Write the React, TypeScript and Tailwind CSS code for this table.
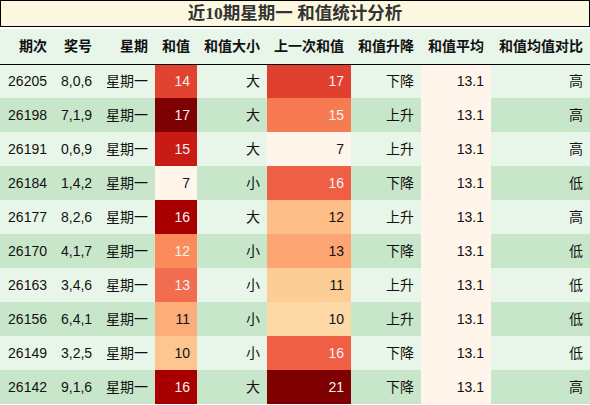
import React from "react";

interface Row {
  issue: string;
  nums: string;
  sum: number;
  sumCls: string;
  size: string;
  prev: number;
  prevCls: string;
  trend: string;
  cmp: string;
}

// heat colours, written out per value so tailwind picks them up
const sumColor: Record<number, string> = {
  7: "bg-[#fff5eb] text-[#111]",
  10: "bg-[#fdc590] text-[#111]",
  11: "bg-[#fdad78] text-[#111]",
  12: "bg-[#fc8b5b] text-[#f4f4f4]",
  13: "bg-[#f26c4f] text-[#f4f4f4]",
  14: "bg-[#e2432f] text-[#f4f4f4]",
  15: "bg-[#c81b16] text-[#f4f4f4]",
  16: "bg-[#a80000] text-[#f4f4f4]",
  17: "bg-[#7f0000] text-[#f4f4f4]",
};

const prevColor: Record<number, string> = {
  7: "bg-[#fff5eb] text-[#111]",
  10: "bg-[#fdd9a8] text-[#111]",
  11: "bg-[#fdcd96] text-[#111]",
  12: "bg-[#fdbe87] text-[#111]",
  13: "bg-[#fda673] text-[#111]",
  15: "bg-[#f67b53] text-[#f4f4f4]",
  16: "bg-[#ef5f45] text-[#f4f4f4]",
  17: "bg-[#e0402d] text-[#f4f4f4]",
  21: "bg-[#7f0000] text-[#f4f4f4]",
};

const raw: [string, string, number, string, number, string, string][] = [
  ["26205", "8,0,6", 14, "大", 17, "下降", "高"],
  ["26198", "7,1,9", 17, "大", 15, "上升", "高"],
  ["26191", "0,6,9", 15, "大", 7, "上升", "高"],
  ["26184", "1,4,2", 7, "小", 16, "下降", "低"],
  ["26177", "8,2,6", 16, "大", 12, "上升", "高"],
  ["26170", "4,1,7", 12, "小", 13, "下降", "低"],
  ["26163", "3,4,6", 13, "小", 11, "上升", "低"],
  ["26156", "6,4,1", 11, "小", 10, "上升", "低"],
  ["26149", "3,2,5", 10, "小", 16, "下降", "低"],
  ["26142", "9,1,6", 16, "大", 21, "下降", "高"],
];

const rows: Row[] = raw.map(([issue, nums, sum, size, prev, trend, cmp]) => ({
  issue,
  nums,
  sum,
  sumCls: sumColor[sum],
  size,
  prev,
  prevCls: prevColor[prev],
  trend,
  cmp,
}));

const headers = ["期次", "奖号", "星期", "和值", "和值大小", "上一次和值", "和值升降", "和值平均", "和值均值对比"];
const widths = [54, 45, 56, 42, 70, 84, 70, 70, 99];

export default function App() {
  return (
    <div className="w-[590px] h-[405px] bg-white font-['Liberation_Sans','Noto_Sans_CJK_SC',sans-serif] text-[14px] text-[#111]">
      <div className="h-[27px] border border-black bg-[#fcf8e0] flex items-center justify-center">
        <h1 className="font-['Liberation_Serif','Noto_Sans_CJK_SC',serif] font-bold text-[17.5px] text-[#333] leading-none">
          近10期星期一 和值统计分析
        </h1>
      </div>
      <table className="mt-[2px] w-[590px] table-fixed border-collapse">
        <colgroup>
          {widths.map((w, i) => (
            <col key={i} style={{ width: w }} />
          ))}
        </colgroup>
        <thead>
          <tr className="h-[35px] bg-[#e8f5e9] border-b border-black">
            {headers.map((h) => (
              <th key={h} className="px-[7px] text-right font-bold whitespace-nowrap">
                {h}
              </th>
            ))}
          </tr>
        </thead>
        <tbody>
          {rows.map((r, i) => (
            <tr key={r.issue} className={`h-[34px] ${i % 2 === 0 ? "bg-[#e8f5e9]" : "bg-[#c8e6c9]"}`}>
              <td className="px-[7px] text-right">{r.issue}</td>
              <td className="px-[7px] text-right">{r.nums}</td>
              <td className="px-[7px] text-right">星期一</td>
              <td className={`px-[7px] text-right ${r.sumCls}`}>{r.sum}</td>
              <td className="px-[7px] text-right">{r.size}</td>
              <td className={`px-[7px] text-right ${r.prevCls}`}>{r.prev}</td>
              <td className="px-[7px] text-right">{r.trend}</td>
              <td className="px-[7px] text-right bg-[#fff5eb]">13.1</td>
              <td className="px-[7px] text-right">{r.cmp}</td>
            </tr>
          ))}
        </tbody>
      </table>
    </div>
  );
}
